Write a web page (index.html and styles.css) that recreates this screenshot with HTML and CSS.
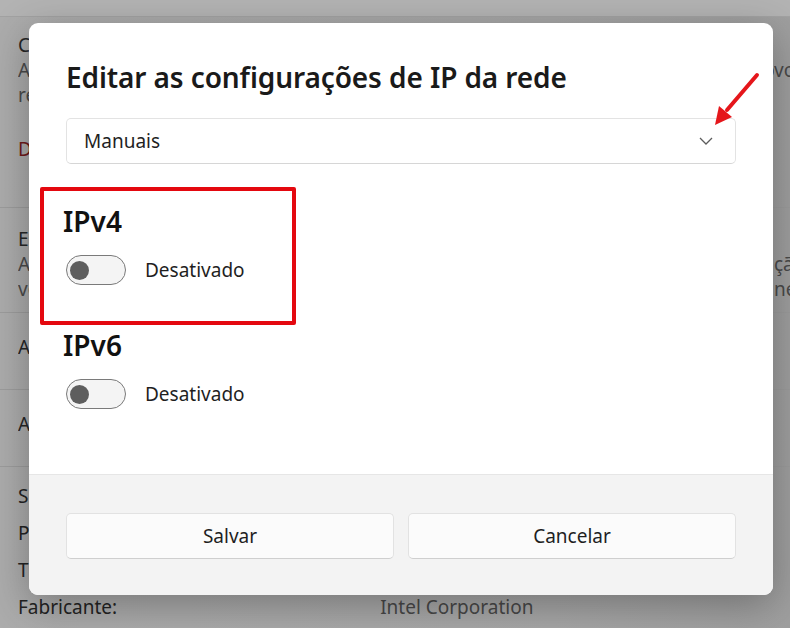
FILE: index.html
```html
<!DOCTYPE html>
<html lang="pt">
<head>
  <meta charset="utf-8">
  <title>Editar as configurações de IP da rede</title>
  <link rel="stylesheet" href="styles.css">
</head>
<body>
<div class="backdrop">
  <div class="top-strip"></div>

  <div class="bg-card card-limit">
    <div class="bg-line bg-title"><span class="bg-text">Conexão limitada</span></div>
    <div class="bg-line"><span class="bg-text">Alguns aplicativos podem funcionar de maneira diferente para reduzir o uso de dados quando</span><span class="bg-tail">vo</span></div>
    <div class="bg-line"><span class="bg-text">rede limitada</span></div>
    <div class="bg-line bg-link"><span class="bg-text">Definir um limite de dados</span></div>
  </div>

  <div class="bg-card card-usage">
    <div class="bg-line bg-title"><span class="bg-text">Estimativa de uso</span></div>
    <div class="bg-line"><span class="bg-text">Ative para ver a estimativa de uso de dados desta rede e receber notifica</span><span class="bg-tail">ção</span></div>
    <div class="bg-line"><span class="bg-text">verifique o limite de dados definido nesta rede</span><span class="bg-tail">ne</span></div>
  </div>

  <div class="bg-card card-single">
    <div class="bg-line bg-title"><span class="bg-text">Atribuição de IP:</span></div>
  </div>

  <div class="bg-card card-single">
    <div class="bg-line bg-title"><span class="bg-text">Atribuição de servidor DNS:</span></div>
  </div>

  <div class="bg-props">
    <div class="bg-prop"><span>SSID:</span></div>
    <div class="bg-prop"><span>Protocolo:</span></div>
    <div class="bg-prop"><span>Tipo de segurança:</span></div>
    <div class="bg-prop"><span>Fabricante:</span><span class="bg-value">Intel Corporation</span></div>
  </div>
</div>

<div class="dialog">
  <div class="dialog-body">
    <h1 class="dialog-title">Editar as configurações de IP da rede</h1>

    <div class="select">
      <span>Manuais</span>
      <svg class="chevron" width="14" height="8" viewBox="0 0 14 8">
        <path d="M1 1 L7 7 L13 1" fill="none" stroke="#5c5c5c" stroke-width="1.3"/>
      </svg>
    </div>

    <div class="ip-section">
      <div class="ip-title">IPv4</div>
      <div class="toggle-row">
        <span class="toggle"><span class="knob"></span></span>
        <span class="toggle-label">Desativado</span>
      </div>
    </div>

    <div class="ip-section">
      <div class="ip-title">IPv6</div>
      <div class="toggle-row">
        <span class="toggle"><span class="knob"></span></span>
        <span class="toggle-label">Desativado</span>
      </div>
    </div>
  </div>

  <div class="dialog-footer">
    <button class="btn">Salvar</button>
    <button class="btn">Cancelar</button>
  </div>

  <div class="highlight"></div>
</div>

<svg class="arrow" width="790" height="628" viewBox="0 0 790 628">
  <line x1="757" y1="75" x2="727" y2="110" stroke="#e5161b" stroke-width="4" stroke-linecap="round"/>
  <polygon points="715,125 732,117 719,106" fill="#e5161b"/>
</svg>
</body>
</html>
```

FILE: styles.css
```css
html, body {
  margin: 0;
  height: 100%;
}

body {
  position: relative;
  overflow: hidden;
  font-family: 'Noto Sans', 'Open Sans', sans-serif;
  color: #1b1b1b;
}

/* dimmed settings page behind the dialog */
.backdrop {
  height: 628px;
  background: linear-gradient(90deg, #acacac 0%, #a6a6a6 70%, #9f9f9f 100%);
  color: #2a2a2a;
  font-size: 19px;
}

.top-strip {
  height: 16px;
  background-color: #b3b3b3;
  border-bottom: 1px solid #a2a2a2;
}

.bg-card {
  box-sizing: border-box;
  padding-left: 18px;
  border-bottom: 1px solid #9c9c9c;
}

.card-limit {
  height: 191px;
  padding-top: 16px;
}

.card-usage {
  height: 105px;
  padding-top: 19px;
}

.card-single {
  height: 77px;
  padding-top: 22px;
}

.bg-line {
  display: flex;
  white-space: nowrap;
  overflow: hidden;
  line-height: 25px;
  color: #4a4a4a;
}

.bg-text {
  flex: 1;
  overflow: hidden;
}

.bg-tail {
  flex: none;
  width: 16px;
  overflow: hidden;
}

.bg-title {
  color: #262626;
}

.bg-link {
  color: #6e1a1a;
  margin-top: 29px;
}

.bg-props {
  padding: 11px 0 0 18px;
}

.bg-prop {
  display: flex;
  line-height: 37px;
  white-space: nowrap;
  color: #232323;
}

.bg-value {
  margin-left: 263px;
  color: #484848;
}

/* dialog */
.dialog {
  position: absolute;
  left: 29px;
  top: 23px;
  width: 744px;
  height: 572px;
  background: #ffffff;
  border-radius: 9px;
  box-shadow: 0 10px 40px rgba(0, 0, 0, 0.3);
  display: flex;
  flex-direction: column;
  overflow: hidden;
}

.dialog-body {
  flex: 1;
  padding: 34px 37px 0 37px;
}

.dialog-title {
  margin: 0 0 21px 0;
  font-size: 28px;
  font-weight: 600;
  line-height: 40px;
  letter-spacing: -0.1px;
  color: #1a1a1a;
}

.select {
  height: 44px;
  border: 1px solid #e3e3e3;
  border-bottom-color: #d6d6d6;
  border-radius: 5px;
  display: flex;
  align-items: center;
  justify-content: space-between;
  padding: 0 22px 0 17px;
  font-size: 19px;
  color: #1f1f1f;
}

.chevron {
  display: block;
}

.ip-section {
  margin-top: 37px;
}

.ip-section + .ip-section {
  margin-top: 40px;
}

.ip-title {
  margin-left: -3px;
  font-size: 28px;
  font-weight: 600;
  line-height: 40px;
  color: #111;
}

.toggle-row {
  display: flex;
  align-items: center;
  gap: 19px;
  margin-top: 14px;
}

.toggle {
  box-sizing: border-box;
  width: 60px;
  height: 30px;
  border: 1.5px solid #7a7a7a;
  border-radius: 15px;
  background: #f4f4f4;
  display: flex;
  align-items: center;
  padding-left: 3px;
}

.knob {
  width: 19px;
  height: 19px;
  border-radius: 50%;
  background: #5e5e5e;
}

.toggle-label {
  font-size: 19px;
  color: #1f1f1f;
}

.dialog-footer {
  height: 121px;
  box-sizing: border-box;
  background: #f3f3f3;
  border-top: 1px solid #e6e6e6;
  padding: 38px 37px 0 37px;
  display: grid;
  grid-template-columns: 1fr 1fr;
  gap: 14px;
  align-items: start;
}

.btn {
  height: 46px;
  background: #fbfbfb;
  border: 1px solid #e2e2e2;
  border-bottom-color: #cfcfcf;
  border-radius: 5px;
  font-family: inherit;
  font-size: 19px;
  color: #1f1f1f;
}

/* red annotation */
.highlight {
  position: absolute;
  left: 11px;
  top: 164px;
  width: 248px;
  height: 130px;
  border: 4px solid #e4080f;
  border-radius: 2px;
}

.arrow {
  position: absolute;
  left: 0;
  top: 0;
  pointer-events: none;
}
```
